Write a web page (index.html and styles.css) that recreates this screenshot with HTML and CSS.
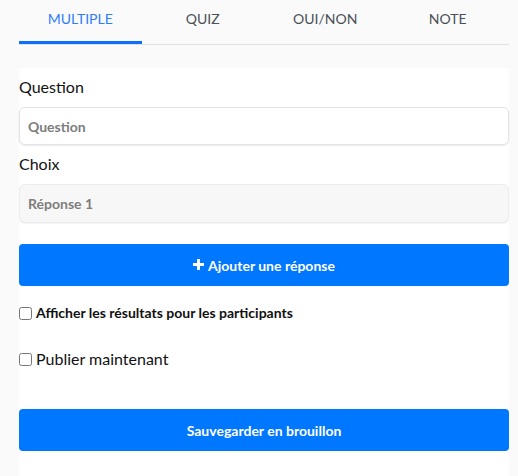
FILE: index.html
```html
<!DOCTYPE html>
<html lang="fr">
<head>
<meta charset="utf-8">
<link rel="stylesheet" href="styles.css">
</head>
<body>
<div class="wrap">
  <nav class="tabs">
    <div class="tab active">MULTIPLE</div>
    <div class="tab">QUIZ</div>
    <div class="tab">OUI/NON</div>
    <div class="tab">NOTE</div>
  </nav>
  <form class="card">
    <label class="label">Question</label>
    <input class="field" type="text" placeholder="Question">
    <label class="label choix">Choix</label>
    <input class="field readonly" type="text" placeholder="Réponse 1" readonly>
    <button type="button" class="btn add"><svg class="plus" viewBox="0 0 12 12" width="11" height="11"><path d="M4.4 0h3.2v4.4H12v3.2H7.6V12H4.4V7.6H0V4.4h4.4z" fill="#fff"/></svg>Ajouter une réponse</button>
    <label class="check small"><input type="checkbox"><span>Afficher les résultats pour les participants</span></label>
    <label class="check big"><input type="checkbox"><span>Publier maintenant</span></label>
    <button type="button" class="btn save">Sauvegarder en brouillon</button>
  </form>
</div>
</body>
</html>
```
FILE: styles.css
```css
html, body {
  margin: 0;
  padding: 0;
  background: #fafafa;
  font-family: Lato, "Open Sans", sans-serif;
  color: #111;
}
.wrap {
  margin-left: 19px;
  width: 490px;
}
.tabs {
  display: flex;
  height: 44px;
  border-bottom: 1px solid #dee2e6;
  box-sizing: content-box;
}
.tab {
  flex: 1;
  text-align: center;
  font-size: 14px;
  line-height: 38px;
  color: #495057;
  box-sizing: border-box;
  border-bottom: 3px solid transparent;
}
.tab.active {
  color: #2f7df7;
  border-bottom-color: #0d6efd;
}
.card {
  margin-top: 23px;
  background: #fff;
  padding-top: 7px;
  padding-bottom: 25px;
  display: flex;
  flex-direction: column;
}
.label {
  font-size: 16px;
  line-height: 24px;
  color: #111;
  margin-bottom: 8px;
}
.label.choix {
  margin-top: 7px;
  margin-bottom: 8px;
}
.field {
  height: 38px;
  box-sizing: border-box;
  border: 1px solid #e3e3e3;
  border-radius: 6px;
  padding: 0 8px;
  font-family: inherit;
  font-size: 14px;
  font-weight: 700;
  box-shadow: 0 1px 2px rgba(0,0,0,0.08);
  background: #fff;
  outline: none;
}
.field::placeholder {
  color: #7d7d7d;
}
.field.readonly {
  background: #f7f7f7;
  border-color: #ececec;
  box-shadow: 0 1px 1px rgba(0,0,0,0.05);
  height: 39px;
}
.btn {
  height: 42px;
  border: none;
  border-radius: 4px;
  background: #0077ff;
  color: #fff;
  font-family: inherit;
  font-size: 14px;
  font-weight: 700;
  display: flex;
  align-items: center;
  justify-content: center;
  gap: 4px;
}
.btn.add {
  margin-top: 21px;
}
.plus {
  display: block;
  margin-top: -1px;
}
.check {
  display: flex;
  align-items: center;
  gap: 4px;
}
.check input {
  margin: 0;
  width: 13px;
  height: 13px;
}
.check.small {
  margin-top: 17px;
  font-size: 14px;
  font-weight: 700;
  line-height: 20px;
}
.check.big {
  margin-top: 24px;
  font-size: 16px;
  line-height: 24px;
}
.btn.save {
  margin-top: 38px;
}
```
